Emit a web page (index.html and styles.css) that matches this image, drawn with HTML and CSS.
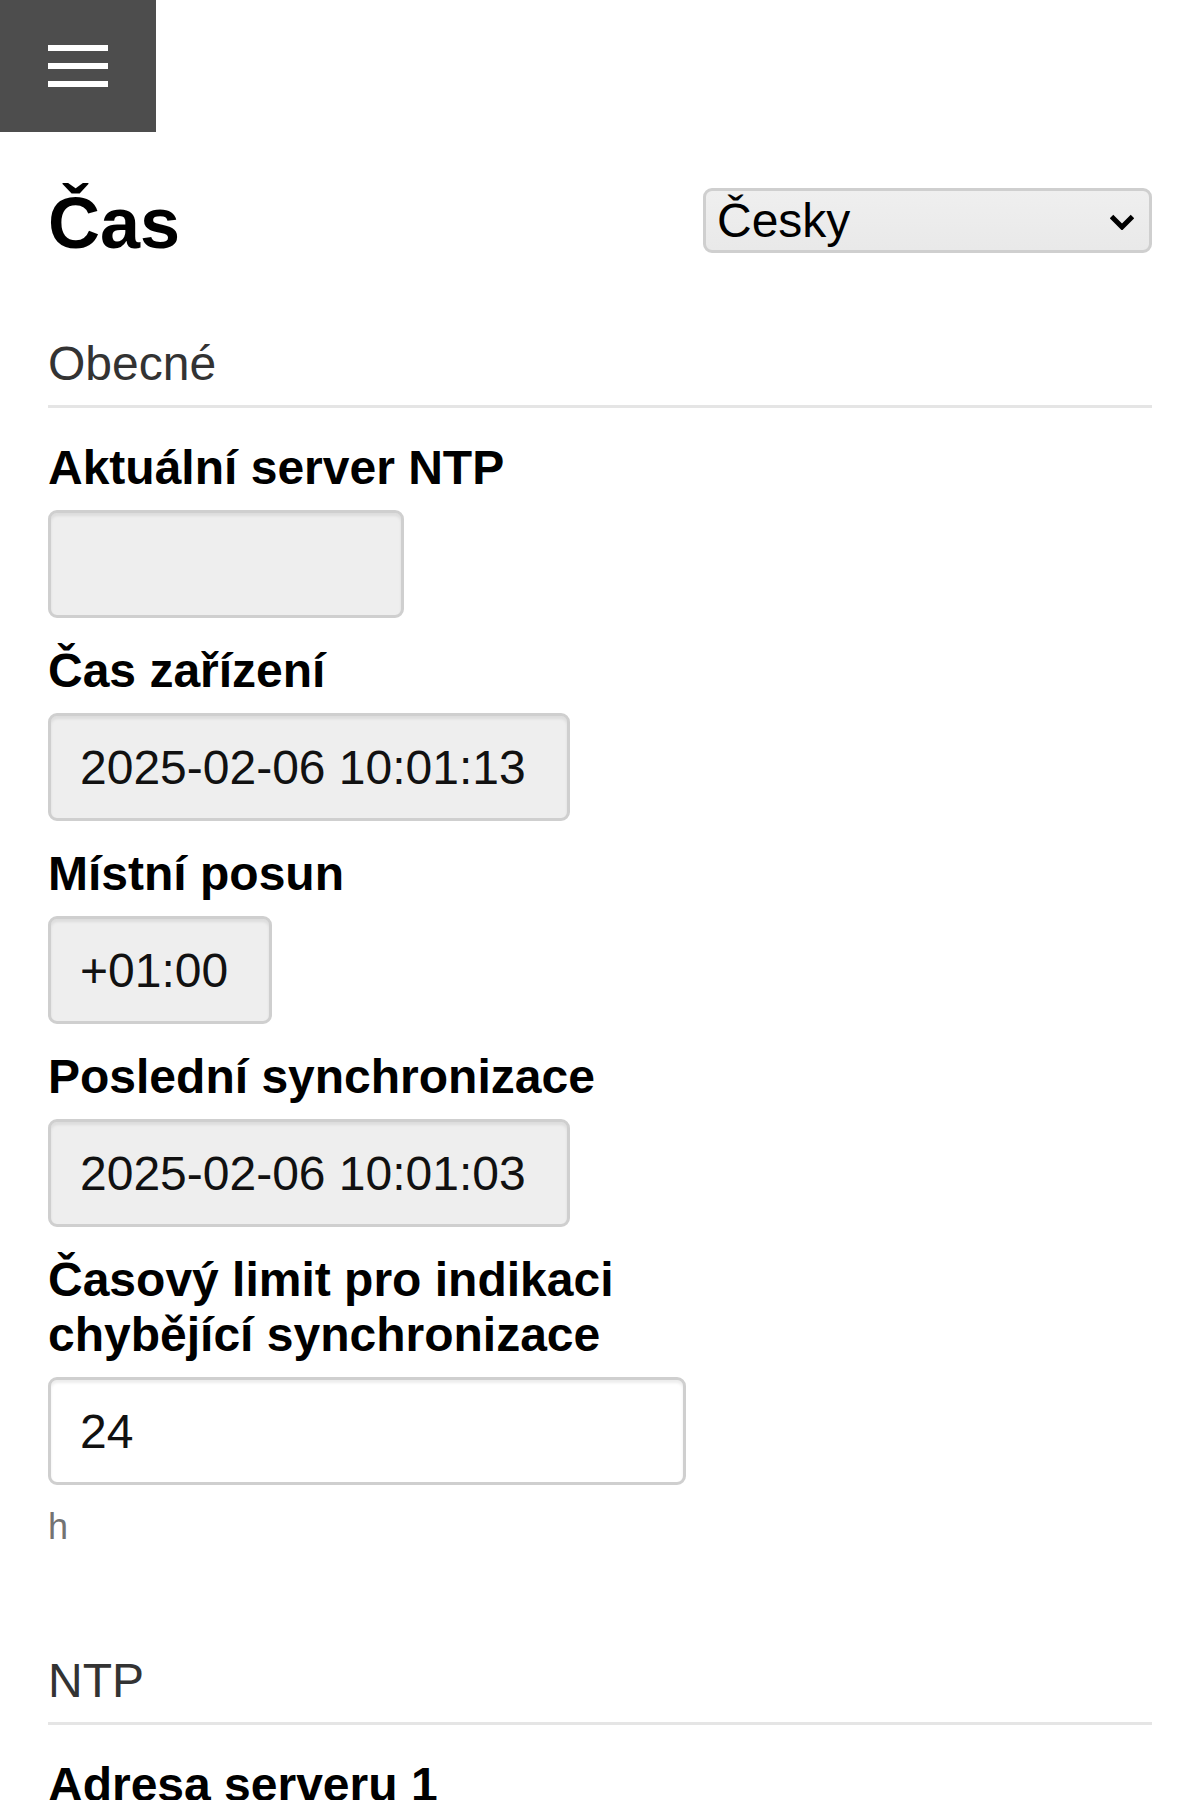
FILE: index.html
```html
<!DOCTYPE html>
<html lang="cs">
<head>
<meta charset="utf-8">
<title>Čas</title>
<link rel="stylesheet" href="styles.css">
</head>
<body>
<div class="menu-btn" aria-label="Menu">
  <span class="bar"></span>
  <span class="bar"></span>
  <span class="bar"></span>
</div>
<main class="content">
  <header class="page-header">
    <h1 class="title">Čas</h1>
    <span class="lang-wrap">
      <select class="lang-select">
        <option>Česky</option>
      </select>
      <svg class="chevron" width="24" height="16" viewBox="0 0 24 16" aria-hidden="true">
        <polyline points="1.5,2.5 12,13 22.5,2.5" fill="none" stroke="#000" stroke-width="5" stroke-linecap="butt" stroke-linejoin="miter"/>
      </svg>
    </span>
  </header>

  <section class="fieldset">
    <div class="legend">Obecné</div>
    <div class="group">
      <label class="label">Aktuální server NTP</label>
      <input class="field readonly w-md" readonly value="">
    </div>
    <div class="group">
      <label class="label">Čas zařízení</label>
      <input class="field readonly w-lg" readonly value="2025-02-06 10:01:13">
    </div>
    <div class="group">
      <label class="label">Místní posun</label>
      <input class="field readonly w-sm" readonly value="+01:00">
    </div>
    <div class="group">
      <label class="label">Poslední synchronizace</label>
      <input class="field readonly w-lg" readonly value="2025-02-06 10:01:03">
    </div>
    <div class="group last">
      <label class="label">Časový limit pro indikaci chybějící synchronizace</label>
      <input class="field w-xl" value="24">
      <div class="help">h</div>
    </div>
  </section>

  <section class="fieldset ntp">
    <div class="legend">NTP</div>
    <div class="group">
      <label class="label">Adresa serveru 1</label>
      <input class="field w-xl" value="">
    </div>
  </section>
</main>
</body>
</html>
```

FILE: styles.css
```css
html, body {
  margin: 0;
  padding: 0;
  background: #fff;
}

body {
  font-family: "Liberation Sans", Arial, sans-serif;
  color: #000;
}

.menu-btn {
  width: 156px;
  height: 132px;
  background: #4d4d4d;
  display: flex;
  flex-direction: column;
  align-items: center;
  justify-content: center;
  gap: 12px;
}

.menu-btn .bar {
  display: block;
  width: 60px;
  height: 6px;
  background: #fff;
}

.content {
  padding: 0 48px;
}

.page-header {
  display: flex;
  justify-content: space-between;
  align-items: center;
  margin-top: 50px;
}

.title {
  margin: 0;
  font-size: 72px;
  font-weight: bold;
  line-height: normal;
}

.lang-wrap {
  position: relative;
  display: block;
  width: 449px;
  height: 65px;
  margin-bottom: 6px;
}

.lang-select {
  -webkit-appearance: none;
  appearance: none;
  width: 100%;
  height: 100%;
  box-sizing: border-box;
  border: 3px solid #cfcfcf;
  border-radius: 9px;
  background: linear-gradient(#efefef, #e9e9e9);
  font-family: "Liberation Sans", Arial, sans-serif;
  font-size: 48px;
  color: #000;
  padding: 0 60px 0 11px;
  margin: 0;
  line-height: normal;
}

.chevron {
  position: absolute;
  right: 18px;
  top: 26px;
  pointer-events: none;
}

.fieldset {
  margin-top: 72px;
}

.legend {
  font-size: 48px;
  line-height: normal;
  color: #333;
  padding-bottom: 14px;
  border-bottom: 3px solid #e5e5e5;
  margin-bottom: 32px;
}

.group {
  max-width: 640px;
  margin-bottom: 25px;
}

.label {
  display: block;
  font-size: 48px;
  font-weight: bold;
  line-height: normal;
  margin-bottom: 15px;
}

.field {
  display: block;
  box-sizing: border-box;
  height: 108px;
  margin: 0;
  padding: 0 29px;
  border: 3px solid #cfcfcf;
  border-radius: 9px;
  background: #fff;
  box-shadow: inset 0 3px 3px rgba(0, 0, 0, 0.075);
  font-family: "Liberation Sans", Arial, sans-serif;
  font-size: 48px;
  color: #111;
  outline: none;
}

.field.readonly {
  background: #eee;
}

.w-sm { width: 224px; }
.w-md { width: 356px; }
.w-lg { width: 522px; }
.w-xl { width: 638px; }

.help {
  font-size: 36px;
  line-height: normal;
  color: #737373;
  margin-top: 21px;
}

.group.last {
  margin-bottom: 0;
}

.fieldset.ntp {
  margin-top: 105px;
}
```
